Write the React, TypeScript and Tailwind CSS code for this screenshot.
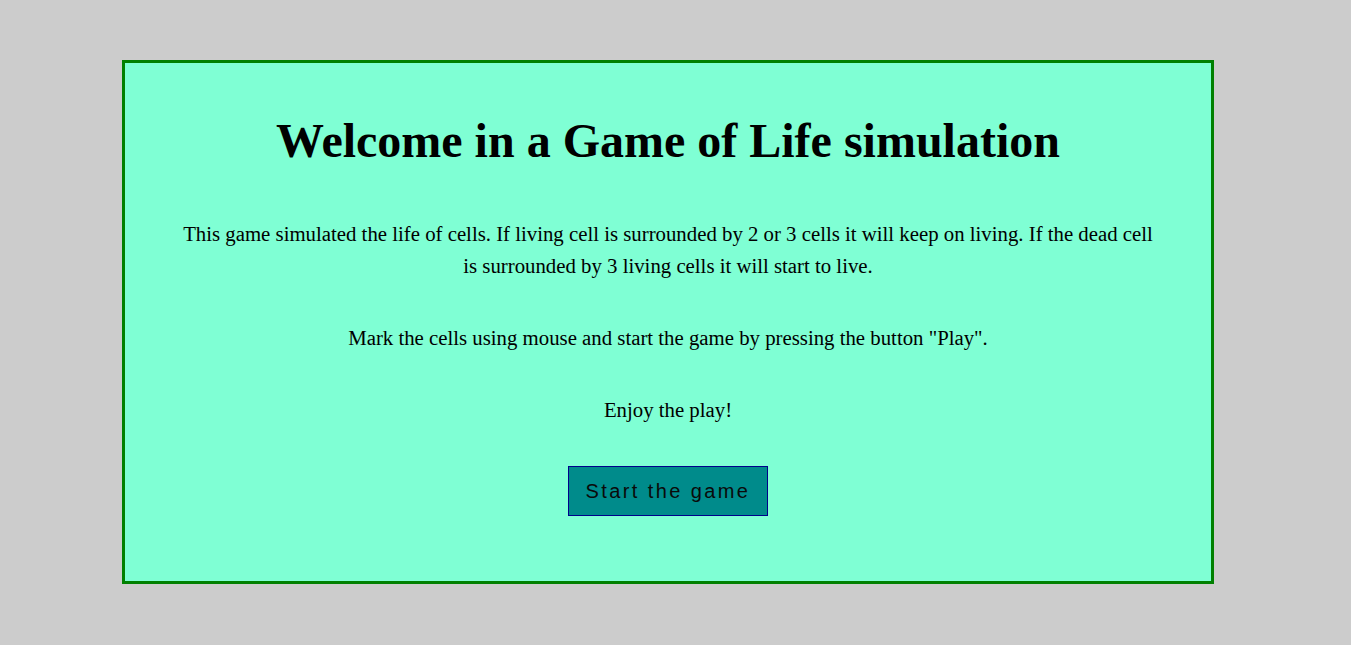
import React from "react";

export default function App() {
  return (
    <div className="min-h-[645px] w-full bg-[#cccccc] pt-[60px]" style={{ fontFamily: '"Liberation Serif", "Times New Roman", serif' }}>
      <div className="ml-[122px] flex w-[1092px] h-[524px] flex-col items-center border-[3px] border-[#008000] bg-[#7fffd4] px-[40px] pt-[48px] text-center text-black">
        <h1 className="m-0 text-[48px] font-bold leading-[60px]">Welcome in a Game of Life simulation</h1>
        <p className="mt-[47px] w-[982px] text-[20.8px] leading-[32px]">
          This game simulated the life of cells. If living cell is surrounded by 2 or 3 cells it will keep on living. If the dead cell is surrounded by 3 living cells it will start to live.
        </p>
        <p className="mt-[40px] text-[20.8px] leading-[32px]">
          Mark the cells using mouse and start the game by pressing the button "Play".
        </p>
        <p className="mt-[40px] text-[20.8px] leading-[32px]">Enjoy the play!</p>
        <button
          className="mt-[40px] h-[50px] w-[200px] border border-[#00008b] bg-[#008b8b] text-[20px] tracking-[2.4px] text-[#0a0a0a]"
          style={{ fontFamily: '"Liberation Sans", Arial, sans-serif' }}
        >
          Start the game
        </button>
      </div>
    </div>
  );
}
